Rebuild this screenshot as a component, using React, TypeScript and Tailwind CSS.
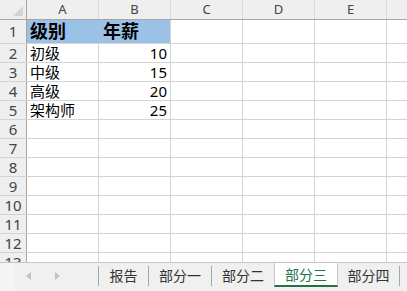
const cols = ['A', 'B', 'C', 'D', 'E', ''];

const rows: { a?: string; b?: string }[] = [
  { a: '初级', b: '10' },
  { a: '中级', b: '15' },
  { a: '高级', b: '20' },
  { a: '架构师', b: '25' },
  {}, {}, {}, {}, {}, {}, {}, {},
];

const tabs = [
  { name: '报告', w: 'w-[49px]', sep: true },
  { name: '部分一', w: 'w-[62px]', sep: true },
  { name: '部分二', w: 'w-[62px]', sep: true },
  { name: '部分三', w: 'w-[64px]', sep: false, active: true },
  { name: '部分四', w: 'w-[61px]', sep: false },
];

const font = { fontFamily: '"Noto Sans", "Noto Sans CJK SC", sans-serif' };

export default function App() {
  return (
    <div className="w-[407px] h-[291px] overflow-hidden bg-white flex flex-col" style={font}>
      {/* sheet grid */}
      <div className="h-[262px] overflow-hidden">
        {/* column header */}
        <div className="flex h-[20px] bg-[#efefef] border-b border-[#a6a6a6]">
          <div className="w-[27px] shrink-0 border-r border-[#a6a6a6] relative">
            <svg className="absolute left-[13px] top-[6px]" width="10" height="10" viewBox="0 0 10 10">
              <path d="M10 0 L10 10 L0 10 Z" fill="#d4d4d4" />
            </svg>
          </div>
          {cols.map((c, i) => (
            <div
              key={i}
              className="w-[72px] shrink-0 flex items-center justify-center text-[13px] text-[#444] border-r border-[#dadada] pt-[1px]"
            >
              {c}
            </div>
          ))}
        </div>

        {/* row 1 */}
        <div className="flex h-[24px] border-b border-[#d4d4d4]">
          <div className="w-[27px] shrink-0 bg-[#efefef] border-r border-[#a6a6a6] flex items-end justify-center pb-[1px] text-[15px] text-[#444]">
            1
          </div>
          <div className="w-[72px] shrink-0 bg-[#9bc2e6] flex items-end pl-[3px] text-[18px] font-bold text-black leading-[24px]">
            级别
          </div>
          <div className="w-[72px] shrink-0 bg-[#9bc2e6] border-r border-[#d4d4d4] flex items-end pl-[4px] text-[18px] font-bold text-black leading-[24px]">
            年薪
          </div>
          {cols.slice(2).map((_, i) => (
            <div key={i} className="w-[72px] shrink-0 border-r border-[#d4d4d4]" />
          ))}
        </div>

        {rows.map((r, i) => (
          <div key={i} className="flex h-[19px] border-b border-[#d4d4d4]">
            <div className="w-[27px] shrink-0 bg-[#efefef] border-r border-[#a6a6a6] flex items-center justify-center text-[15px] text-[#444] leading-[19px]">
              {i + 2}
            </div>
            <div className="w-[72px] shrink-0 border-r border-[#d4d4d4] flex items-center pl-[3px] text-[15px] text-black leading-[19px]">
              {r.a}
            </div>
            <div className="w-[72px] shrink-0 border-r border-[#d4d4d4] flex items-center justify-end pr-[3px] text-[15px] text-black leading-[19px]">
              {r.b}
            </div>
            {cols.slice(2).map((_, j) => (
              <div key={j} className="w-[72px] shrink-0 border-r border-[#d4d4d4]" />
            ))}
          </div>
        ))}
      </div>

      {/* sheet tabs */}
      <div className="h-[29px] flex border-t border-[#c6c6c6] bg-[#f0f0f0]">
        <div className="w-[14px] shrink-0 bg-[#f5f5f5]" />
        <div className="w-[84px] shrink-0 flex items-center gap-[24px] pl-[12px] pb-[3px]">
          <svg width="5" height="8" viewBox="0 0 5 8">
            <path d="M5 0 L0 4 L5 8 Z" fill="#c2c2c2" />
          </svg>
          <svg width="5" height="8" viewBox="0 0 5 8">
            <path d="M0 0 L5 4 L0 8 Z" fill="#c2c2c2" />
          </svg>
        </div>
        <div className="flex h-[24px] text-[14px]">
          {tabs.map((t) =>
            t.active ? (
              <div
                key={t.name}
                className={`${t.w} shrink-0 bg-white border-x border-[#c6c6c6] border-b-2 border-b-[#217346] flex items-center justify-center text-[#217346]`}
              >
                {t.name}
              </div>
            ) : (
              <div key={t.name} className="flex items-center shrink-0">
                {t.sep && <div className="w-px h-[20px] bg-[#a6a6a6] mt-[2px]" />}
                <div className={`${t.w} flex items-center justify-center text-[#333] pt-[1px]`}>
                  {t.name}
                </div>
              </div>
            )
          )}
          <div className="flex items-center">
            <div className="w-px h-[20px] bg-[#a6a6a6] mt-[2px]" />
          </div>
        </div>
      </div>
    </div>
  );
}
